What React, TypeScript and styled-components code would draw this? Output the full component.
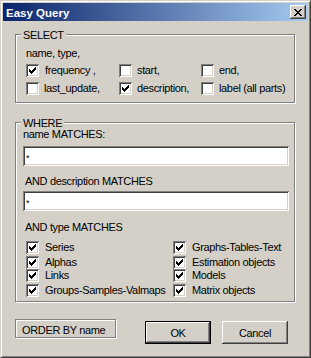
import React from "react";
import styled, { createGlobalStyle } from "styled-components";

const GlobalStyle = createGlobalStyle`
  html, body {
    margin: 0;
    padding: 0;
    background: #d4d0c8;
  }
  body {
    font-family: "Liberation Sans", Arial, sans-serif;
    font-size: 11px;
    color: #000;
  }
`;

const Window = styled.div`
  width: 311px;
  height: 358px;
  box-sizing: border-box;
  background: #d4d0c8;
  border: 1px solid;
  border-color: #d4d0c8 #404040 #404040 #d4d0c8;
  box-shadow: inset 1px 1px #fff, inset -1px -1px #808080;
  padding: 2px;
  display: flex;
  flex-direction: column;
`;

const TitleBar = styled.div`
  height: 18px;
  flex-shrink: 0;
  display: flex;
  align-items: center;
  justify-content: space-between;
  padding: 0 2px 0 3px;
  background: linear-gradient(to right, #0a246a, #a6caf0);
`;

const TitleText = styled.span`
  color: #fff;
  font-weight: bold;
  font-size: 11.5px;
  line-height: 14px;
  margin-top: 2px;
`;

const CloseButton = styled.div`
  width: 16px;
  height: 14px;
  box-sizing: border-box;
  background: #d4d0c8;
  box-shadow: inset -1px -1px #404040, inset 1px 1px #fff,
    inset -2px -2px #808080, inset 2px 2px #d4d0c8;
  display: flex;
  align-items: center;
  justify-content: center;
`;

const Body = styled.div`
  flex: 1;
  display: flex;
  flex-direction: column;
  padding: 0 12px;
  letter-spacing: -0.35px;
  line-height: 13px;
`;

const Group = styled.div<{ $height: number; $top: number }>`
  width: 280px;
  height: ${({ $height }) => $height}px;
  box-sizing: border-box;
  margin-top: ${({ $top }) => $top}px;
  border: 1px solid #808080;
  box-shadow: inset 1px 1px #fff, 1px 1px #fff;
  display: flex;
  flex-direction: column;
  align-items: flex-start;
`;

const Legend = styled.div`
  margin: -6px 0 0 5px;
  padding: 0 2px;
  background: #d4d0c8;
  line-height: 13px;
`;

const SelectContent = styled.div`
  padding-left: 10px;
  display: flex;
  flex-direction: column;
  align-self: stretch;
`;

const Caption = styled.div<{ $top: number; $left?: number }>`
  margin-top: ${({ $top }) => $top}px;
  margin-left: ${({ $left = 0 }) => $left}px;
  line-height: 13px;
  white-space: nowrap;
`;

const CheckGrid = styled.div<{ $cols: string; $rows: string; $top: number; $left: number }>`
  display: grid;
  grid-template-columns: ${({ $cols }) => $cols};
  grid-template-rows: ${({ $rows }) => $rows};
  grid-auto-flow: ${({ $rows }) => ($rows === "auto" ? "row" : "column")};
  margin-top: ${({ $top }) => $top}px;
  margin-left: ${({ $left }) => $left}px;
  row-gap: 0;
`;

const CheckItem = styled.label<{ $gap: number }>`
  display: flex;
  align-items: center;
  height: 13px;
  gap: ${({ $gap }) => $gap}px;
  white-space: nowrap;
`;

const Box = styled.span`
  width: 13px;
  height: 13px;
  box-sizing: border-box;
  flex-shrink: 0;
  background: #fff;
  box-shadow: inset 1px 1px #808080, inset -1px -1px #fff,
    inset 2px 2px #404040, inset -2px -2px #d4d0c8;
  display: block;
  position: relative;
`;

const WhereContent = styled.div`
  padding-left: 7px;
  display: flex;
  flex-direction: column;
  align-self: stretch;
`;

const TextField = styled.input<{ $top: number }>`
  width: 266px;
  height: 20px;
  box-sizing: border-box;
  margin: ${({ $top }) => $top}px 0 0 0;
  padding: 3px 0 0 3px;
  border: none;
  outline: none;
  background: #fff;
  box-shadow: inset 1px 1px #808080, inset -1px -1px #fff,
    inset 2px 2px #404040, inset -2px -2px #d4d0c8;
  font-family: "Liberation Sans", Arial, sans-serif;
  font-size: 9px;
  line-height: 10px;
  vertical-align: top;
`;

const ButtonRow = styled.div`
  display: flex;
  align-items: flex-start;
  margin-top: 17px;
`;

const OrderBy = styled.div`
  width: 101px;
  height: 19px;
  box-sizing: border-box;
  border: 1px solid #808080;
  box-shadow: inset 1px 1px #fff, 1px 1px #fff;
  padding: 4px 0 0 6px;
  line-height: 13px;
  white-space: nowrap;
`;

const Button = styled.button<{ $default?: boolean; $left: number }>`
  width: 66px;
  height: 23px;
  margin: 2px 0 0 ${({ $left }) => $left}px;
  padding: 0;
  box-sizing: border-box;
  background: #d4d0c8;
  font-family: "Liberation Sans", Arial, sans-serif;
  font-size: 11px;
  letter-spacing: -0.35px;
  color: #000;
  border: ${({ $default }) => ($default ? "1px solid #000" : "none")};
  box-shadow: inset -1px -1px #404040, inset 1px 1px #fff,
    inset -2px -2px #808080, inset 2px 2px #d4d0c8;
  cursor: default;
`;

const Check = () => (
  <svg width="13" height="13" viewBox="0 0 13 13" style={{ position: "absolute", left: 0, top: 0 }} shapeRendering="crispEdges">
    <path
      fill="#000"
      d="M3 5h1v3H3z M4 6h1v3H4z M5 7h1v3H5z M6 6h1v3H6z M7 5h1v3H7z M8 4h1v3H8z M9 3h1v3H9z"
    />
  </svg>
);

const CheckBox = ({ checked, label, gap = 6 }: { checked: boolean; label: string; gap?: number }) => (
  <CheckItem $gap={gap}>
    <Box>{checked && <Check />}</Box>
    <span>{label}</span>
  </CheckItem>
);

const selectFields = [
  { label: "frequency ,", checked: true },
  { label: "start,", checked: false },
  { label: "end,", checked: false },
  { label: "last_update,", checked: false },
  { label: "description,", checked: true },
  { label: "label (all parts)", checked: false },
];

const typeFields = [
  "Series",
  "Alphas",
  "Links",
  "Groups-Samples-Valmaps",
  "Graphs-Tables-Text",
  "Estimation objects",
  "Models",
  "Matrix objects",
];

export default function App() {
  return (
    <>
      <GlobalStyle />
      <Window>
        <TitleBar>
          <TitleText>Easy Query</TitleText>
          <CloseButton>
            <svg width="8" height="7" viewBox="0 0 8 7" shapeRendering="crispEdges">
              <path
                fill="#000"
                d="M0 0h2v1H0z M6 0h2v1H6z M1 1h2v1H1z M5 1h2v1H5z M2 2h4v1H2z M3 3h2v1H3z M2 4h4v1H2z M1 5h2v1H1z M5 5h2v1H5z M0 6h2v1H0z M6 6h2v1H6z"
              />
            </svg>
          </CloseButton>
        </TitleBar>
        <Body>
          <Group $height={69} $top={13}>
            <Legend>SELECT</Legend>
            <SelectContent>
              <Caption $top={5}>name, type,</Caption>
              <CheckGrid $cols="93px 82px 1fr" $rows="auto" $top={4} $left={0} style={{ rowGap: 5 }}>
                {selectFields.map((f) => (
                  <CheckBox key={f.label} checked={f.checked} label={f.label} gap={f.label === "frequency ," ? 6 : 5} />
                ))}
              </CheckGrid>
            </SelectContent>
          </Group>

          <Group $height={180} $top={19}>
            <Legend style={{ marginBottom: -2 }}>WHERE</Legend>
            <WhereContent>
              <Caption $top={0}>name MATCHES:</Caption>
              <TextField $top={5} readOnly defaultValue="*" />
              <Caption $top={9} $left={2}>AND description MATCHES</Caption>
              <TextField $top={3} readOnly defaultValue="*" />
              <Caption $top={10} $left={2}>AND type MATCHES</Caption>
              <CheckGrid $cols="147px 1fr" $rows="15px 13px 15px 13px" $top={7} $left={3}>
                {typeFields.map((t) => (
                  <CheckBox key={t} checked label={t} />
                ))}
              </CheckGrid>
            </WhereContent>
          </Group>

          <ButtonRow>
            <OrderBy>ORDER BY name</OrderBy>
            <Button $default $left={29}>OK</Button>
            <Button $left={11}>Cancel</Button>
          </ButtonRow>
        </Body>
      </Window>
    </>
  );
}
